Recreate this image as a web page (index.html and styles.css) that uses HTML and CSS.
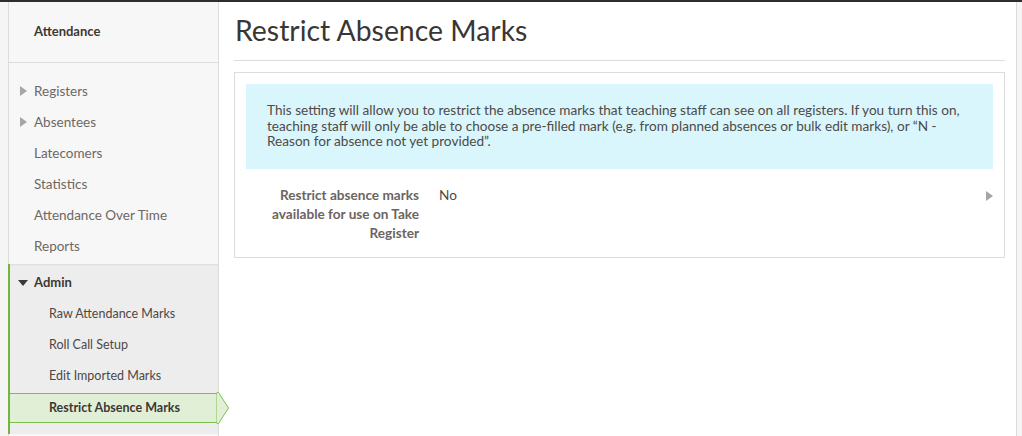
FILE: index.html
```html
<!DOCTYPE html>
<html lang="en">
  <head>
    <meta charset="UTF-8" />
    <title>Restrict Absence Marks</title>
    <link rel="stylesheet" href="styles.css">
  </head>
  <body>
    <div class="page">
      <div class="gutter"></div>

      <div class="sidebar">
        <div class="sidebar-header">Attendance</div>
        <ul class="nav">
          <li class="nav-item has-children">Registers</li>
          <li class="nav-item has-children">Absentees</li>
          <li class="nav-item">Latecomers</li>
          <li class="nav-item">Statistics</li>
          <li class="nav-item">Attendance Over Time</li>
          <li class="nav-item">Reports</li>
        </ul>
        <div class="nav-section">
          <div class="section-title">Admin</div>
          <ul class="subnav">
            <li class="sub-item">Raw Attendance Marks</li>
            <li class="sub-item">Roll Call Setup</li>
            <li class="sub-item">Edit Imported Marks</li>
            <li class="sub-item active">
              Restrict Absence Marks
              <svg class="active-arrow" width="13" height="32" viewBox="0 0 13 32">
                <polygon points="0,0.5 1.5,0.5 11.5,16 1.5,31.5 0,31.5" fill="#e2efd7" stroke="#7cbf4a" stroke-width="1" />
                <rect x="0" y="1" width="1.5" height="30" fill="#e2efd7" />
              </svg>
            </li>
          </ul>
        </div>
      </div>

      <div class="main">
        <h1 class="page-title">Restrict Absence Marks</h1>
        <div class="panel">
          <div class="info">
            This setting will allow you to restrict the absence marks that teaching staff can see on all registers. If you turn this on,
            teaching staff will only be able to choose a pre-filled mark (e.g. from planned absences or bulk edit marks), or “N -
            Reason for absence not yet provided”.
          </div>
          <div class="field">
            <div class="field-label">Restrict absence marks available for use on Take Register</div>
            <div class="field-value">No</div>
            <div class="field-arrow"></div>
          </div>
        </div>
      </div>

      <div class="rightbar"></div>
    </div>
  </body>
</html>
```

FILE: styles.css
```css
body {
  margin: 0;
  font-family: Lato, "Open Sans", sans-serif;
  background-color: #fff;
  color: #5a5450;
}

.page {
  display: flex;
  min-height: 434px;
  border-top: 2px solid #302c29;
}

.gutter {
  width: 8px;
  background-color: #f5f5f5;
  border-right: 1px solid #dcdcdc;
}

.sidebar {
  width: 209px;
  background-color: #f7f7f7;
  border-right: 1px solid #dcdcdc;
}

.sidebar-header {
  height: 60px;
  line-height: 58px;
  padding-left: 25px;
  font-size: 13px;
  font-weight: bold;
  color: #3c3835;
  border-bottom: 1px solid #dcdcdc;
}

.nav,
.subnav {
  list-style: none;
  margin: 0;
  padding: 0;
}

.nav {
  padding: 13px 0 2px;
}

.nav-item {
  position: relative;
  height: 31px;
  line-height: 31px;
  padding-left: 25px;
  font-size: 13.5px;
  color: #6e6763;
}

.has-children::before {
  content: "";
  position: absolute;
  left: 11px;
  top: 10px;
  border-left: 7px solid #aaa5a2;
  border-top: 5px solid transparent;
  border-bottom: 5px solid transparent;
}

.nav-section {
  background-color: #eeeded;
  border-left: 2px solid #72b63f;
  margin-left: -1px;
  box-shadow: inset 0 2px 2px -1px rgba(0, 0, 0, 0.08);
  padding-top: 3px;
  padding-bottom: 11px;
}

.section-title {
  position: relative;
  height: 31px;
  line-height: 31px;
  padding-left: 24px;
  font-size: 13px;
  font-weight: bold;
  color: #3c3835;
}

.section-title::before {
  content: "";
  position: absolute;
  left: 8px;
  top: 13px;
  border-top: 6px solid #3c3835;
  border-left: 5px solid transparent;
  border-right: 5px solid transparent;
}

.sub-item {
  height: 31px;
  line-height: 31px;
  padding-left: 39px;
  font-size: 12.5px;
  color: #4d4845;
}

.sub-item.active {
  position: relative;
  margin-top: 2px;
  height: 28px;
  line-height: 28px;
  background-color: #e2efd7;
  border-top: 1px solid #7cbf4a;
  border-bottom: 1px solid #7cbf4a;
  font-weight: bold;
  color: #3c3835;
}

.active-arrow {
  position: absolute;
  right: -12px;
  top: -2px;
  overflow: visible;
}

.main {
  flex: 1;
  padding: 0 11px 0 15px;
}

.page-title {
  margin: 0;
  height: 58px;
  line-height: 57px;
  padding-left: 1px;
  font-size: 28.4px;
  font-weight: normal;
  color: #3a3633;
  border-bottom: 1px solid #dcdcdc;
}

.panel {
  margin-top: 11px;
  border: 1px solid #dcdcdc;
  padding: 11px 11px 14px;
}

.info {
  background-color: #d9f6fc;
  padding: 19px 21px 19px;
  font-size: 13.6px;
  line-height: 15.5px;
  color: #4f4a47;
}

.field {
  display: flex;
  margin-top: 17px;
  font-size: 13.6px;
  line-height: 19px;
}

.field-label {
  width: 173px;
  padding-left: 18px;
  box-sizing: border-box;
  text-align: right;
  font-weight: bold;
  color: #6b6561;
}

.field-value {
  flex: 1;
  padding-left: 20px;
  color: #4f4a47;
}

.field-arrow {
  width: 0;
  height: 0;
  margin-top: 5px;
  border-left: 7px solid #a9a4a1;
  border-top: 5px solid transparent;
  border-bottom: 5px solid transparent;
}

.rightbar {
  width: 5px;
  background-color: #f5f5f5;
  border-left: 1px solid #dcdcdc;
}
```
